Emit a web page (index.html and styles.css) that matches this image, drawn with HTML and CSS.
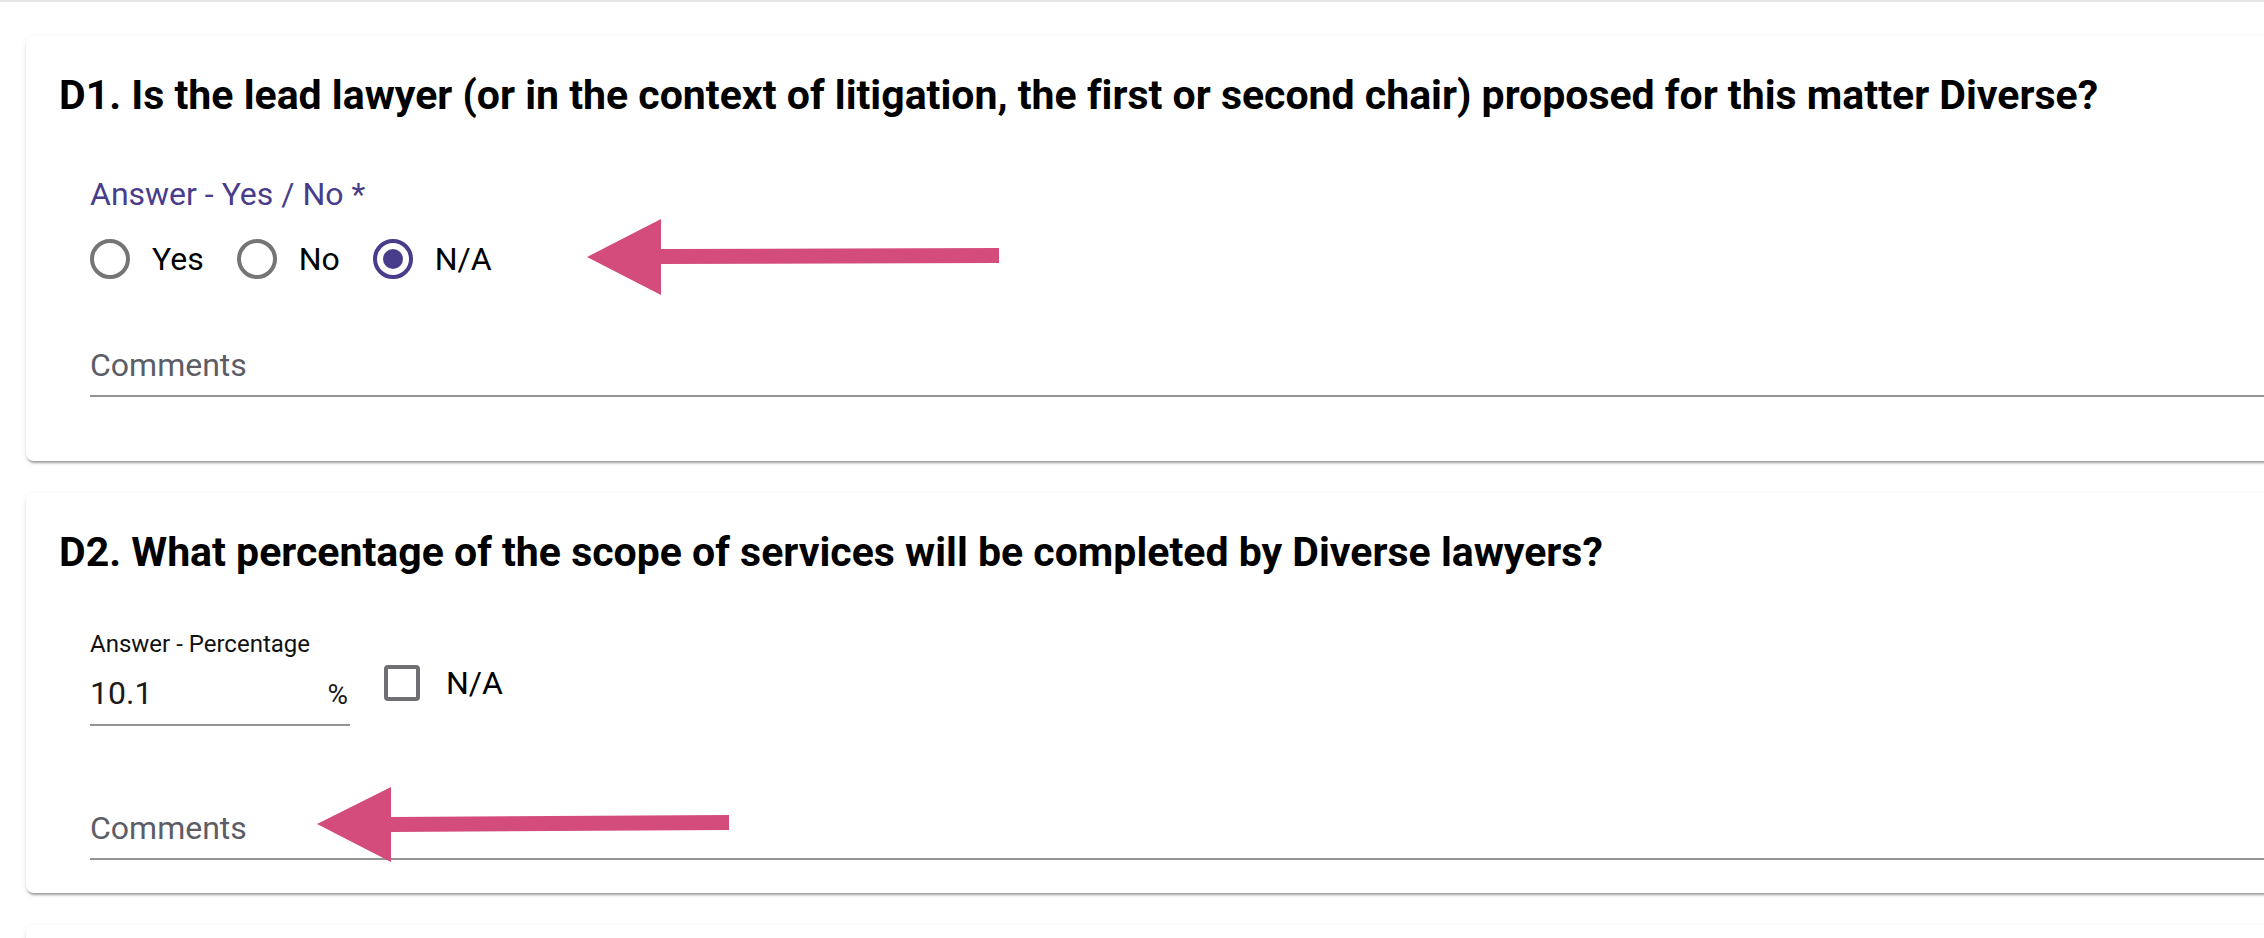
FILE: index.html
```html
<!DOCTYPE html>
<html lang="en">
<head>
    <meta charset="UTF-8">
    <meta name="viewport" content="width=device-width, initial-scale=1.0">
    <title>Diversity Questions</title>
    <link rel="stylesheet" href="styles.css">
</head>
<body>
    <div class="page">

        <div class="card card-roomy">
            <h2 class="question">D1. Is the lead lawyer (or in the context of litigation, the first or second chair) proposed for this matter Diverse?</h2>

            <div class="field">
                <div class="group-label">Answer - Yes / No *</div>
                <div class="radio-row">
                    <label class="radio"><span class="radio-circle"></span>Yes</label>
                    <label class="radio"><span class="radio-circle"></span>No</label>
                    <label class="radio"><span class="radio-circle checked"></span>N/A</label>
                </div>
                <div class="text-input comments">Comments</div>
            </div>

            <!-- annotation arrow -->
            <svg class="arrow arrow-one" width="413" height="76" viewBox="0 0 413 76">
                <path d="M0 38 L74 0 L74 30 L412 29 L412 44 L74 45 L74 76 Z" fill="#d44c7b"/>
            </svg>
        </div>

        <div class="card">
            <h2 class="question">D2. What percentage of the scope of services will be completed by Diverse lawyers?</h2>

            <div class="field">
                <div class="percent-row">
                    <div class="percent-field">
                        <div class="small-label">Answer - Percentage</div>
                        <div class="percent-input">
                            <span>10.1</span>
                            <span class="unit">%</span>
                        </div>
                    </div>
                    <label class="checkbox"><span class="checkbox-box"></span>N/A</label>
                </div>
                <div class="text-input comments comments-spaced">Comments</div>
            </div>

            <svg class="arrow arrow-two" width="413" height="76" viewBox="0 0 413 76">
                <path d="M0 37 L74 0 L74 30 L412 28 L412 43 L74 45 L74 75 Z" fill="#d44c7b"/>
            </svg>
        </div>

        <div class="card card-empty"></div>

    </div>
</body>
</html>
```

FILE: styles.css
```css
html, body { height: 100%; overflow: hidden; }
body { margin: 0; font-family: Roboto, "Liberation Sans", sans-serif; background: #fff; border-top: 2px solid #e6e6e6; }
.page { padding: 34px 0 0 26px; overflow: hidden; }

.card { position: relative; background: #fff; border-radius: 8px; margin: 0 -40px 32px 0; padding: 34px 0 33px 33px;
    box-shadow: 0 4px 2px -2px rgba(0,0,0,.22), 0 2px 2px 0 rgba(0,0,0,.12), 0 2px 6px 0 rgba(0,0,0,.08); }
.card-roomy { padding-bottom: 64px; }
.card-empty { height: 120px; padding: 0; }

.question { margin: 0; font-size: 41px; line-height: 50px; font-weight: 700; color: #000; font-variant-ligatures: none; }

.field { margin-left: 31px; }
.group-label { margin-top: 55px; font-size: 32px; line-height: 38px; color: #483d8b; }

.radio-row { display: flex; align-items: center; height: 48px; margin-top: 22px; }
.radio { display: flex; align-items: center; gap: 22px; margin-right: 33px; font-size: 32px; line-height: 38px; color: #000; }
.radio-circle { box-sizing: border-box; width: 40px; height: 40px; border: 4px solid #757575; border-radius: 50%; position: relative; }
.radio-circle.checked { border-color: #483d8b; }
.radio-circle.checked::after { content: ""; position: absolute; left: 6px; top: 6px; width: 20px; height: 20px; border-radius: 50%; background: #483d8b; }

.text-input { font-size: 32px; line-height: 38px; padding-bottom: 11px; border-bottom: 2px solid #949494; }
.comments { margin-top: 63px; color: #5c5d66; }
.comments-spaced { margin-top: 83px; }

.percent-row { display: flex; align-items: flex-start; margin-top: 53px; }
.percent-field { width: 260px; }
.small-label { font-size: 24px; line-height: 28px; color: #111; }
.percent-input { display: flex; justify-content: space-between; align-items: baseline; margin-top: 16px; padding: 0 2px 10px 0;
    font-size: 32px; line-height: 38px; color: #1a1a1a; border-bottom: 2px solid #949494; }
.percent-input .unit { font-size: 28px; }

.checkbox { display: flex; align-items: center; gap: 26px; margin: 34px 0 0 34px; font-size: 32px; line-height: 38px; color: #000; }
.checkbox-box { box-sizing: border-box; width: 36px; height: 36px; border: 4px solid #6f6f74; border-radius: 4px; }

.arrow { position: absolute; }
.arrow-one { left: 561px; top: 183px; }
.arrow-two { left: 291px; top: 294px; }
```
